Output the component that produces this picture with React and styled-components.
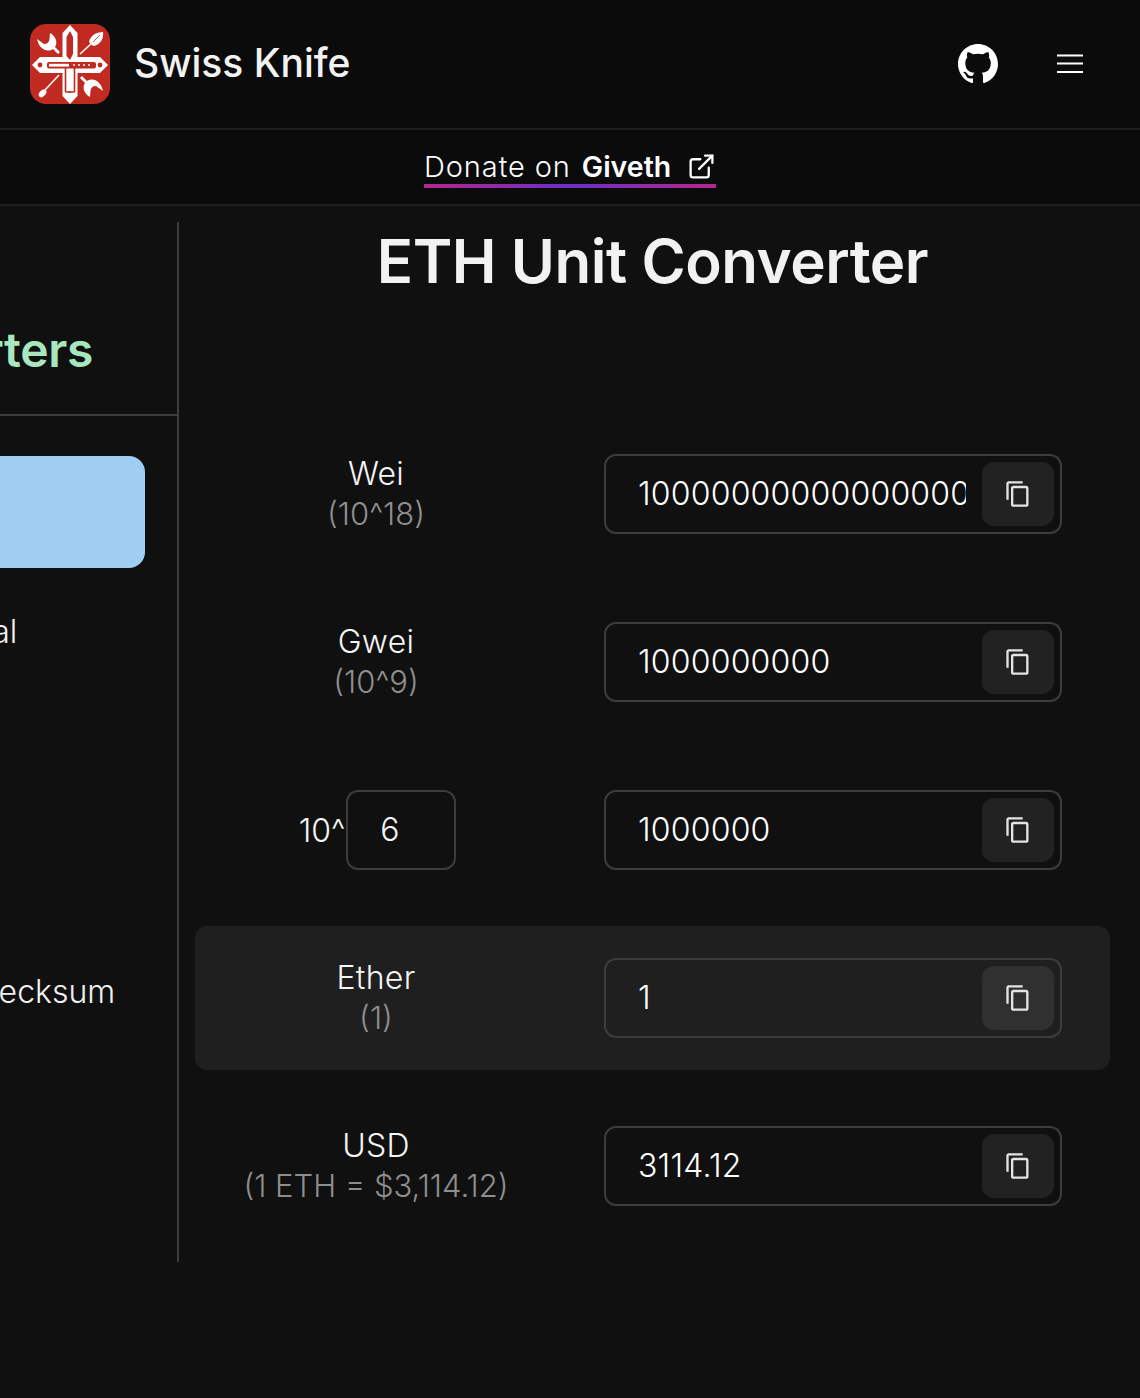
import React from 'react';
import styled, { createGlobalStyle } from 'styled-components';
import { ExternalLink } from 'lucide-react';

const GlobalStyle = createGlobalStyle`
  * { box-sizing: border-box; }
  html, body { margin: 0; padding: 0; }
  body {
    background: #101010;
    color: #f2f2f2;
    font-family: Inter, "Liberation Sans", sans-serif;
    overflow-x: hidden;
    min-height: 1398px;
  }
`;

const UNITS = [
  { id: 'wei', name: 'Wei', hint: '(10^18)', value: '1000000000000000000' },
  { id: 'gwei', name: 'Gwei', hint: '(10^9)', value: '1000000000' },
  { id: 'custom', exponent: '6', value: '1000000' },
  { id: 'ether', name: 'Ether', hint: '(1)', value: '1', active: true },
  { id: 'usd', name: 'USD', hint: '(1 ETH = $3,114.12)', value: '3114.12' },
];

const WRENCH =
  'M20 9 C26 12 28 19 25 23 L30 28 L28 30 L23 25 C17 29 9 25 7 15 L14 20 Q19 20 19.5 15 Z';

const Logo = () => (
  <svg width="80" height="80" viewBox="0 0 80 80" aria-label="Swiss Knife logo">
    <rect width="80" height="80" rx="16" fill="#c02a20" />
    <path
      d="M40 1 L47.5 9 V33 H70 L78 41 L70 49 H47.5 V72 L40 80 L32.5 72 V49 H10 L2 41 L10 33 H32.5 V9 Z"
      fill="#fff"
    />
    <path d="M40 7 L43 13 V30 L40 36 L36.5 32 V13 Z" fill="#c02a20" />
    <rect x="17" y="38" width="49" height="6.5" rx="2" fill="#c02a20" />
    <rect x="19" y="39.8" width="20" height="2.8" fill="#fff" />
    <circle cx="44" cy="41" r="1" fill="#fff" />
    <circle cx="49" cy="41" r="1" fill="#fff" />
    <circle cx="54" cy="41" r="1" fill="#fff" />
    <circle cx="59" cy="41" r="1" fill="#fff" />
    <circle cx="10" cy="41" r="2.4" fill="#c02a20" />
    <circle cx="70" cy="41" r="2.4" fill="#c02a20" />
    <path d="M35.5 44 V68 M44.5 44 V68 M35.5 68 H44.5" stroke="#c02a20" strokeWidth="1.6" fill="none" />
    <circle cx="40" cy="68" r="1.1" fill="#c02a20" />
    {/* two wrenches, the second one is the first turned round the centre */}
    <path d={WRENCH} fill="#fff" />
    <path d={WRENCH} fill="#fff" transform="rotate(180 40 41)" />
    {/* spear, top right */}
    <path d="M50 30 L62 19" stroke="#fff" strokeWidth="1.6" />
    <path d="M73 8 C66 8 60 12 59 18 L63 22 C70 21 74 15 73 8 Z" fill="#fff" />
    <path d="M70 11 L63 18" stroke="#c02a20" strokeWidth="0.8" />
    {/* screwdriver, bottom left */}
    <path d="M29 51 L15 66" stroke="#fff" strokeWidth="1.6" />
    <ellipse cx="12.6" cy="69.3" rx="3" ry="4.6" transform="rotate(42 12.6 69.3)" fill="#fff" />
  </svg>
);

const GithubIcon = () => (
  <svg width="40" height="40" viewBox="0 0 16 16" fill="#fff" aria-label="GitHub">
    <path d="M8 0C3.58 0 0 3.58 0 8c0 3.54 2.29 6.53 5.47 7.59.4.07.55-.17.55-.38 0-.19-.01-.82-.01-1.49-2.01.37-2.53-.49-2.69-.94-.09-.23-.48-.94-.82-1.13-.28-.15-.68-.52-.01-.53.63-.01 1.08.58 1.23.82.72 1.21 1.87.87 2.33.66.07-.52.28-.87.51-1.07-1.78-.2-3.64-.89-3.64-3.95 0-.87.31-1.59.82-2.15-.08-.2-.36-1.02.08-2.12 0 0 .67-.21 2.2.82.64-.18 1.32-.27 2-.27.68 0 1.36.09 2 .27 1.53-1.04 2.2-.82 2.2-.82.44 1.1.16 1.92.08 2.12.51.56.82 1.27.82 2.15 0 3.07-1.87 3.75-3.65 3.95.29.25.54.73.54 1.48 0 1.07-.01 1.93-.01 2.2 0 .21.15.46.55.38A8.013 8.013 0 0016 8c0-4.42-3.58-8-8-8z" />
  </svg>
);

const MenuIcon = () => (
  <svg width="26" height="20" viewBox="0 0 26 20" aria-label="Menu">
    <path d="M0 1.5h26M0 9.5h26M0 18h26" stroke="#fff" strokeWidth="2" />
  </svg>
);

const CopyIcon = () => (
  <svg width="28" height="28" viewBox="0 0 24 24" fill="#e4e4e4">
    <path d="M16 1H4c-1.1 0-2 .9-2 2v14h2V3h12V1zm3 4H8c-1.1 0-2 .9-2 2v14c0 1.1.9 2 2 2h11c1.1 0 2-.9 2-2V7c0-1.1-.9-2-2-2zm0 16H8V7h11v14z" />
  </svg>
);

export default function App() {
  return (
    <>
      <GlobalStyle />
      <Header>
        <Brand>
          <Logo />
          <BrandName>Swiss Knife</BrandName>
        </Brand>
        <HeaderActions>
          <GithubIcon />
          <MenuIcon />
        </HeaderActions>
      </Header>
      <DonateBar>
        <DonateLink>
          <DonateText>Donate on</DonateText>
          <strong>Giveth</strong>
          <ExternalLink size={29} strokeWidth={1.9} />
        </DonateLink>
      </DonateBar>
      <Main>
        <Sidebar>
          <SidebarTitle>Converters</SidebarTitle>
          <NavList>
            <NavActive />
            <NavItem>Hexadecimal</NavItem>
            <NavItem $offset={288}>Address Checksum</NavItem>
          </NavList>
        </Sidebar>
        <Content>
          <Title>ETH Unit Converter</Title>
          <Rows>
            {UNITS.map((unit) => (
              <Row key={unit.id} $active={unit.active}>
                {unit.exponent ? (
                  <ExponentLabel>
                    10^
                    <ExponentInput readOnly value={unit.exponent} />
                  </ExponentLabel>
                ) : (
                  <UnitLabel>
                    {unit.name}
                    <UnitHint>{unit.hint}</UnitHint>
                  </UnitLabel>
                )}
                <ValueField>
                  <ValueInput readOnly value={unit.value} />
                  <CopyButton type="button" aria-label="Copy">
                    <CopyIcon />
                  </CopyButton>
                </ValueField>
              </Row>
            ))}
          </Rows>
        </Content>
      </Main>
    </>
  );
}

const Header = styled.header`
  height: 130px;
  padding: 0 57px 0 30px;
  display: flex;
  align-items: center;
  justify-content: space-between;
  background: #0b0b0b;
  border-bottom: 2px solid #1e1e1e;
`;
const Brand = styled.div`
  display: flex;
  align-items: center;
  gap: 24px;
`;
const BrandName = styled.div`
  margin-bottom: 3px;
  font-size: 39px;
  font-weight: 500;
  color: #f2f2f2;
`;
const HeaderActions = styled.div`
  display: flex;
  align-items: center;
  gap: 59px;
`;
const DonateBar = styled.div`
  height: 76px;
  padding-top: 18px;
  display: flex;
  justify-content: center;
  background: #0b0b0b;
  border-bottom: 2px solid #1e1e1e;
`;
const DonateLink = styled.a`
  height: 40px;
  width: 292px;
  padding-top: 1px;
  display: flex;
  align-items: center;
  font-size: 29px;
  font-weight: 300;
  line-height: 36px;
  white-space: pre;
  color: #fff;
  border-bottom: 4px solid transparent;
  border-image: linear-gradient(90deg, #b5278f, #6a2fc4, #b5278f) 1;

  strong {
    margin-left: 11px;
    font-size: 28.5px;
    font-weight: 600;
  }
  svg {
    flex: none;
    margin-left: 16px;
  }
`;
const DonateText = styled.span`
  letter-spacing: 0.9px;
`;
const Main = styled.main`
  display: flex;
  align-items: flex-start;
  padding-top: 16px;
`;
const Sidebar = styled.aside`
  flex: none;
  width: 404px;
  height: 1040px;
  margin-left: -225px;
  border-right: 2px solid #3d3d3d;
`;
const SidebarTitle = styled.h2`
  height: 194px;
  margin: 0;
  padding-top: 98px;
  padding-left: 62px;
  font-size: 48px;
  font-weight: 600;
  line-height: 60px;
  letter-spacing: -0.3px;
  color: #a8e6bf;
  border-bottom: 2px solid #3d3d3d;
`;
const NavList = styled.nav`
  margin-top: 40px;
  padding-right: 32px;
  display: flex;
  flex-direction: column;
`;
const NavActive = styled.div`
  height: 112px;
  margin-bottom: 27px;
  border-radius: 16px;
  background: #a0cdf2;
`;
const NavItem = styled.div`
  height: 72px;
  margin-top: ${({ $offset }) => $offset || 0}px;
  padding-left: 50px;
  display: flex;
  align-items: center;
  font-size: 32px;
  font-weight: 300;
  white-space: nowrap;
  color: #f2f2f2;
`;
const Content = styled.section`
  flex: none;
  width: 915px;
  margin-left: 16px;
`;
const Title = styled.h1`
  height: 200px;
  margin: 0;
  text-align: center;
  font-size: 60px;
  font-weight: 600;
  line-height: 78px;
  letter-spacing: -0.45px;
  color: #f2f2f2;
`;
const Rows = styled.div`
  display: flex;
  flex-direction: column;
  gap: 24px;
`;
const Row = styled.div`
  height: 144px;
  display: grid;
  grid-template-columns: 362px 458px;
  column-gap: 47px;
  align-items: center;
  border-radius: 12px;
  background: ${({ $active }) => ($active ? '#1f1f1f' : 'transparent')};
`;
const UnitLabel = styled.div`
  display: flex;
  flex-direction: column;
  align-items: center;
  font-size: 32px;
  font-weight: 300;
  line-height: 40px;
  letter-spacing: 0.3px;
  color: #f5f5f5;
`;
const UnitHint = styled.span`
  font-size: 31px;
  letter-spacing: 0;
  color: #8e8e8e;
`;
const ExponentLabel = styled.label`
  display: flex;
  align-items: center;
  justify-content: center;
  padding-left: 3px;
  font-size: 32px;
  font-weight: 300;
  color: #f5f5f5;
`;
const ExponentInput = styled.input`
  width: 110px;
  height: 80px;
  margin-left: 1px;
  padding: 0 32px 2px;
  font: inherit;
  color: #f5f5f5;
  background: transparent;
  border: 2px solid #3c3c3c;
  border-radius: 12px;
  outline: none;
`;
const ValueField = styled.div`
  height: 80px;
  padding: 6px 6px 6px 32px;
  display: flex;
  align-items: center;
  gap: 16px;
  border: 2px solid #3c3c3c;
  border-radius: 12px;
`;
const ValueInput = styled.input`
  flex: 1;
  min-width: 0;
  padding: 0 0 2px;
  font: inherit;
  font-size: 32px;
  font-weight: 300;
  letter-spacing: 0.2px;
  color: #fff;
  background: transparent;
  border: none;
  outline: none;
`;
const CopyButton = styled.button`
  flex: none;
  width: 72px;
  height: 64px;
  padding: 0;
  display: flex;
  align-items: center;
  justify-content: center;
  background: rgba(255, 255, 255, 0.08);
  border: none;
  border-radius: 12px;
`;
